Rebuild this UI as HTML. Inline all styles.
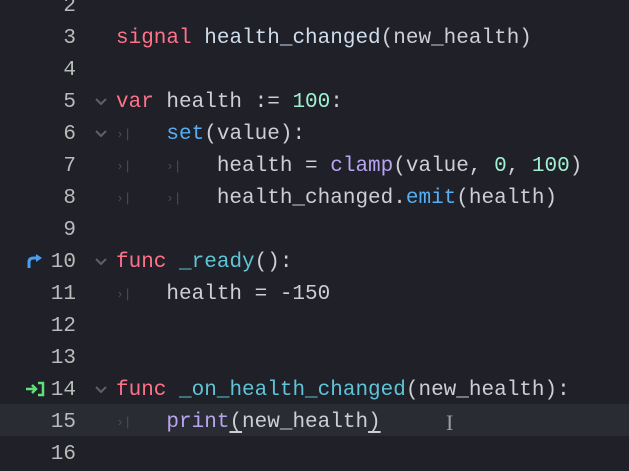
<!DOCTYPE html>
<html><head><meta charset="utf-8"><style>
html,body{margin:0;padding:0;width:629px;height:469px;overflow:hidden;background:#1f2028;}
.l{position:absolute;left:0;width:629px;height:32px;line-height:32px;font-family:"Liberation Mono",monospace;font-size:21px;color:#cdcfd3;white-space:pre;}
.l>span,.l>svg{position:relative;top:3px}
.n{position:absolute!important;right:553px;color:#b7bcb8;}
.c{position:absolute!important;left:116px;}
.k{color:#ff7289}.f{color:#5fc4d8}.b{color:#57aef2}.p{color:#b9a4f0}.num{color:#a0f0d0}.s{color:#cfdcec}
.t{color:#4a4d56;font-size:13px}
.fold{position:absolute!important;left:94px;top:13px!important}
.cur{background:#2a2c33}
</style></head><body>
<div class="l" style="top:-12px"><span class="n">2</span></div>
<div class="l" style="top:20px"><span class="n">3</span><span class="c"><span class="k">signal</span> <span class="s">health_changed</span>(new_health)</span></div>
<div class="l" style="top:52px"><span class="n">4</span></div>
<div class="l" style="top:84px"><span class="n">5</span><svg class="fold" width="14" height="10" viewBox="0 0 14 10"><path d="M2 2l5 5 5-5" stroke="#5d616b" stroke-width="2" fill="none"/></svg><span class="c"><span class="k">var</span> health := <span class="num">100</span>:</span></div>
<div class="l" style="top:116px"><span class="n">6</span><svg class="fold" width="14" height="10" viewBox="0 0 14 10"><path d="M2 2l5 5 5-5" stroke="#5d616b" stroke-width="2" fill="none"/></svg><span class="c"><span class="t" style="position:absolute;left:0">›|</span>    <span class="b">set</span>(value):</span></div>
<div class="l" style="top:148px"><span class="n">7</span><span class="c"><span class="t" style="position:absolute;left:0">›|</span><span class="t" style="position:absolute;left:50px">›|</span>        health = <span class="p">clamp</span>(value, <span class="num">0</span>, <span class="num">100</span>)</span></div>
<div class="l" style="top:180px"><span class="n">8</span><span class="c"><span class="t" style="position:absolute;left:0">›|</span><span class="t" style="position:absolute;left:50px">›|</span>        health_changed.<span class="b">emit</span>(health)</span></div>
<div class="l" style="top:212px"><span class="n">9</span></div>
<div class="l" style="top:244px"><svg style="position:absolute;left:26px;top:9px" width="18" height="16" viewBox="0 0 18 16"><path d="M3 15V9q0-4 5-4h4" stroke="#4a9ef0" stroke-width="3" fill="none"/><path d="M10 1l6 4-6 4z" fill="#4a9ef0"/></svg><span class="n">10</span><svg class="fold" width="14" height="10" viewBox="0 0 14 10"><path d="M2 2l5 5 5-5" stroke="#5d616b" stroke-width="2" fill="none"/></svg><span class="c"><span class="k">func</span> <span class="f">_ready</span>():</span></div>
<div class="l" style="top:276px"><span class="n">11</span><span class="c"><span class="t" style="position:absolute;left:0">›|</span>    health = -150</span></div>
<div class="l" style="top:308px"><span class="n">12</span></div>
<div class="l" style="top:340px"><span class="n">13</span></div>
<div class="l" style="top:372px"><svg style="position:absolute;left:24px;top:9px" width="22" height="16" viewBox="0 0 22 16"><path d="M2 8h9" stroke="#5ee07a" stroke-width="2.5"/><path d="M8 4l4 4-4 4" stroke="#5ee07a" stroke-width="2.5" fill="none"/><path d="M14 2h5v12h-5" stroke="#5ee07a" stroke-width="2.5" fill="none"/></svg><span class="n">14</span><svg class="fold" width="14" height="10" viewBox="0 0 14 10"><path d="M2 2l5 5 5-5" stroke="#5d616b" stroke-width="2" fill="none"/></svg><span class="c"><span class="k">func</span> <span class="f">_on_health_changed</span>(new_health):</span></div>
<div class="l cur" style="top:404px"><span class="n">15</span><span class="c"><span class="t" style="position:absolute;left:0">›|</span>    <span class="p">print</span><u style="text-underline-offset:4px">(</u>new_health<u style="text-underline-offset:4px">)</u></span><span style="position:absolute;left:446px;color:#9a9ca2;font-family:'Liberation Serif',serif;font-size:22px">I</span></div>
<div class="l" style="top:436px"><span class="n">16</span></div>
</body></html>
